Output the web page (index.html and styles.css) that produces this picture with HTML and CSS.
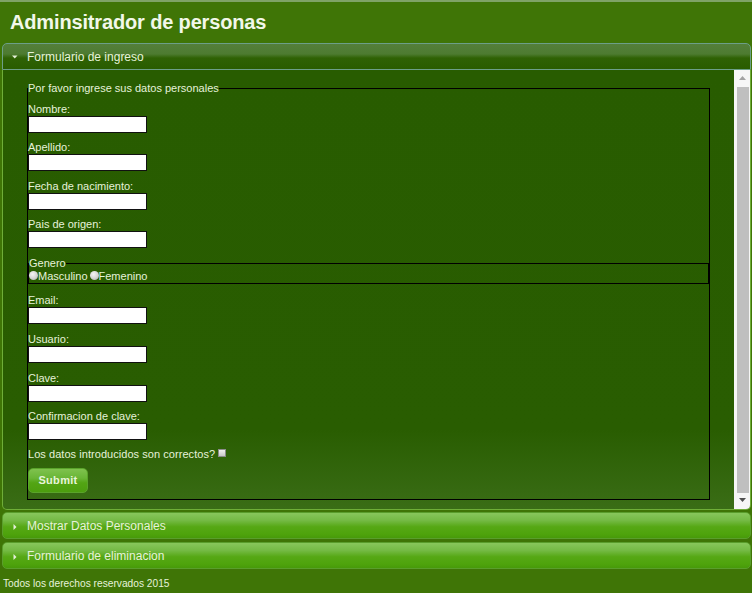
FILE: index.html
```
<!DOCTYPE html>
<html lang="es">
<head>
<meta charset="utf-8">
<title>Adminsitrador de personas</title>
<link rel="stylesheet" href="styles.css">
</head>
<body>
<div class="top">
  <h1 class="title">Adminsitrador de personas</h1>
</div>
<div class="acc">
  <div class="hdr hdr-active">
    <svg class="ico" width="15" height="12" viewBox="0 0 15 12"><path d="M0 4.4 L5.5 4.4 L2.75 7.6 Z" fill="#e4f0d8"/></svg>
    <span>Formulario de ingreso</span>
  </div>
  <div class="panel">
    <div class="content">
      <fieldset class="fs">
        <legend class="lg">Por favor ingrese sus datos personales</legend>
        <div class="fields">
          <div class="field"><label class="lbl">Nombre:</label><input class="inp" type="text"></div>
          <div class="field"><label class="lbl">Apellido:</label><input class="inp" type="text"></div>
          <div class="field"><label class="lbl">Fecha de nacimiento:</label><input class="inp" type="text"></div>
          <div class="field"><label class="lbl">Pais de origen:</label><input class="inp" type="text"></div>
          <fieldset class="fs-inner">
            <legend class="lg lg-inner">Genero</legend>
            <div class="radios"><input class="rad" type="radio" name="g"><span>Masculino</span><input class="rad rad-2" type="radio" name="g"><span>Femenino</span></div>
          </fieldset>
          <div class="field"><label class="lbl">Email:</label><input class="inp" type="text"></div>
          <div class="field"><label class="lbl">Usuario:</label><input class="inp" type="text"></div>
          <div class="field"><label class="lbl">Clave:</label><input class="inp" type="password"></div>
          <div class="field"><label class="lbl">Confirmacion de clave:</label><input class="inp" type="password"></div>
          <div class="check">Los datos introducidos son correctos?<input class="chk" type="checkbox"></div>
          <button class="btn" type="button">Submit</button>
        </div>
      </fieldset>
    </div>
    <div class="scroll">
      <div class="sb-btn"><svg width="16" height="16" viewBox="0 0 16 16"><path d="M5 10 L12 10 L8.5 6 Z" fill="#a3a3a3"/></svg></div>
      <div class="sb-thumb"></div>
      <div class="sb-btn sb-btn-down"><svg width="16" height="16" viewBox="0 0 16 16"><path d="M5 4 L12 4 L8.5 8 Z" fill="#505050"/></svg></div>
    </div>
  </div>
  <div class="hdr hdr-closed">
    <svg class="ico" width="15" height="12" viewBox="0 0 15 12"><path d="M1.5 4 L4.5 7 L1.5 10 Z" fill="#e4f0d8"/></svg>
    <span>Mostrar Datos Personales</span>
  </div>
  <div class="hdr hdr-closed">
    <svg class="ico" width="15" height="12" viewBox="0 0 15 12"><path d="M1.5 4 L4.5 7 L1.5 10 Z" fill="#e4f0d8"/></svg>
    <span>Formulario de eliminacion</span>
  </div>
</div>
<div class="footer">Todos los derechos reservados 2015</div>
</body>
</html>
```
FILE: styles.css
```
html, body {
  margin: 0;
  padding: 0;
}
body {
  background: #3f7506;
  font-family: "Liberation Sans", Arial, sans-serif;
  color: #e6f2da;
  height: 593px;
  overflow: hidden;
}
.top {
  border-top: 2px solid #7fa366;
}
.title {
  margin: 0;
  padding: 8px 10px 9px;
  font-size: 20px;
  line-height: 24px;
  font-weight: bold;
  letter-spacing: -0.15px;
  color: #f2f8ea;
}
.acc {
  margin: 0 1px 0 2px;
}
.hdr {
  display: flex;
  align-items: center;
  box-sizing: border-box;
  height: 27px;
  padding-left: 9px;
  font-size: 12px;
  color: #e6f2da;
}
.ico {
  flex: none;
  display: block;
}
.hdr-active {
  border: 1px solid #6c9f88;
  border-radius: 5px 5px 0 0;
  background: linear-gradient(to bottom, #547f3a 0%, #4d7b30 40%, #2f6204 56%, #295c00 100%);
}
.hdr-closed {
  margin-top: 2px;
  border: 1px solid #5a9e2c;
  border-radius: 5px;
  background: linear-gradient(to bottom, #88c75c 0%, #74ba44 30%, #56a815 55%, #4ea30c 85%, #479a0a 100%);
}
.hdr-closed + .hdr-closed {
  margin-top: 3px;
}
.panel {
  display: flex;
  box-sizing: border-box;
  height: 440px;
  border: 1px solid #6fae38;
  border-top: none;
  border-radius: 0 0 5px 5px;
  background: linear-gradient(to bottom, #285c00 0%, #295d01 82%, #3a6d16 100%);
  overflow: hidden;
}
.content {
  flex: 1;
  padding: 11.5px 24px 0 24px;
}
.fs {
  margin: 0;
  padding: 0 0 6px 0;
  border: 1px solid #000;
  font-size: 11px;
  line-height: 13px;
}
.lg {
  padding: 0;
  color: #e6f2da;
  line-height: 13px;
}
.fields {
  display: flex;
  flex-direction: column;
  align-items: flex-start;
  padding-top: 8px;
}
.field {
  display: flex;
  flex-direction: column;
  margin-bottom: 8.67px;
}
.lbl {
  line-height: 13px;
}
.inp {
  box-sizing: border-box;
  width: 119px;
  height: 17px;
  margin: 0;
  padding: 0 2px;
  border: 1px solid #111;
  background: #fff;
  font-size: 11px;
}
.fs-inner {
  align-self: stretch;
  margin: 0 0 10.2px 0;
  padding: 0;
  border: 1px solid #000;
}
.lg-inner {
  margin-left: 0;
}
.radios {
  display: flex;
  align-items: center;
  height: 13px;
}
.rad {
  appearance: none;
  -webkit-appearance: none;
  width: 9px;
  height: 9px;
  margin: 0;
  border-radius: 50%;
  background: radial-gradient(circle at 40% 35%, #f4f4f4 0%, #d6d6d6 50%, #a2a2a2 100%);
  position: relative;
  top: -1px;
}
.rad-2 {
  margin-left: 2px;
}
.check {
  display: flex;
  align-items: center;
  line-height: 13px;
  margin-top: -1px;
  letter-spacing: 0.05px;
}
.chk {
  appearance: none;
  -webkit-appearance: none;
  box-sizing: border-box;
  width: 8px;
  height: 8px;
  margin: 0 0 0 3px;
  border: 1px solid #8c8c8c;
  background: linear-gradient(to bottom, #f0f0f0, #c8c8c8);
  position: relative;
  top: -1px;
}
.btn {
  margin-top: 7px;
  box-sizing: border-box;
  width: 60px;
  height: 25px;
  padding: 0;
  border: 1px solid #5aa42a;
  border-radius: 5px;
  background: linear-gradient(to bottom, #7fc24e 0%, #69b536 40%, #53a514 60%, #4c9e0e 100%);
  color: #e8f4da;
  font-family: "Liberation Sans", Arial, sans-serif;
  font-size: 11px;
  font-weight: bold;
  letter-spacing: 0.3px;
}
.scroll {
  flex: none;
  width: 16px;
  display: flex;
  flex-direction: column;
  background: #f6f6f6;
}
.sb-btn {
  height: 16px;
  flex: none;
}
.sb-btn svg {
  display: block;
}
.sb-btn-down {
  height: 15px;
}
.sb-thumb {
  flex: 1;
  margin: 1px 1px 1px 3px;
  background: #bfbfbf;
}
.footer {
  padding: 8px 3px 0;
  font-size: 10.2px;
  line-height: 13px;
  color: #e6f2da;
}
```
